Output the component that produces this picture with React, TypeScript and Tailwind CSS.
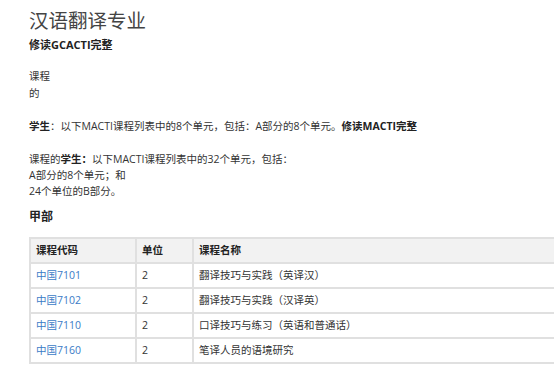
import React from 'react';

const rows = [
  { code: '中国7101', units: '2', name: '翻译技巧与实践（英译汉）' },
  { code: '中国7102', units: '2', name: '翻译技巧与实践（汉译英）' },
  { code: '中国7110', units: '2', name: '口译技巧与练习（英语和普通话）' },
  { code: '中国7160', units: '2', name: '笔译人员的语境研究' },
];

const App = () => {
  return (
    <div
      className="w-[554px] h-[368px] overflow-hidden bg-white text-[#333] text-[10.5px]"
      style={{ fontFamily: '"Open Sans", "Noto Sans CJK SC", sans-serif' }}
    >
      <div className="pl-[29px] pt-[7px]">
        <h1 className="text-[19.5px] leading-[28px] text-[#444] font-normal">汉语翻译专业</h1>
        <p className="mt-[2px] leading-[16px] text-[11px] font-bold text-[#222]">修读GCACTI完整</p>

        <p className="mt-[15px] leading-[17px]">
          课程
          <br />
          的
        </p>

        <p className="mt-[16px] leading-[16px]">
          <b className="text-[#222]">学生</b>：以下MACTI课程列表中的8个单元，包括：A部分的8个单元。
          <b className="text-[#222]">修读MACTI完整</b>
        </p>

        <p className="mt-[17px] leading-[16px]">
          课程的<b className="text-[#222]">学生：</b>以下MACTI课程列表中的32个单元，包括：
          <br />
          A部分的8个单元；和
          <br />
          24个单位的B部分。
        </p>

        <h2 className="mt-[8px] text-[12px] leading-[20px] font-bold text-[#222]">甲部</h2>

        <table className="mt-[10px] w-[620px] table-fixed border-collapse">
          <colgroup>
            <col className="w-[106px]" />
            <col className="w-[57px]" />
            <col />
          </colgroup>
          <thead>
            <tr className="bg-[#f2f2f2] h-[25px]">
              <th className="border-2 border-[#e0e0e0] px-[5px] text-left font-bold text-[#222]">课程代码</th>
              <th className="border-2 border-[#e0e0e0] px-[5px] text-left font-bold text-[#222]">单位</th>
              <th className="border-2 border-[#e0e0e0] px-[5px] text-left font-bold text-[#222]">课程名称</th>
            </tr>
          </thead>
          <tbody>
            {rows.map((r) => (
              <tr key={r.code} className="h-[25px]">
                <td className="border-2 border-[#e0e0e0] px-[5px]">
                  <a className="text-[#3b7bc6]">{r.code}</a>
                </td>
                <td className="border-2 border-[#e0e0e0] px-[5px]">{r.units}</td>
                <td className="border-2 border-[#e0e0e0] px-[5px]">{r.name}</td>
              </tr>
            ))}
          </tbody>
        </table>
      </div>
    </div>
  );
};

export default App;
